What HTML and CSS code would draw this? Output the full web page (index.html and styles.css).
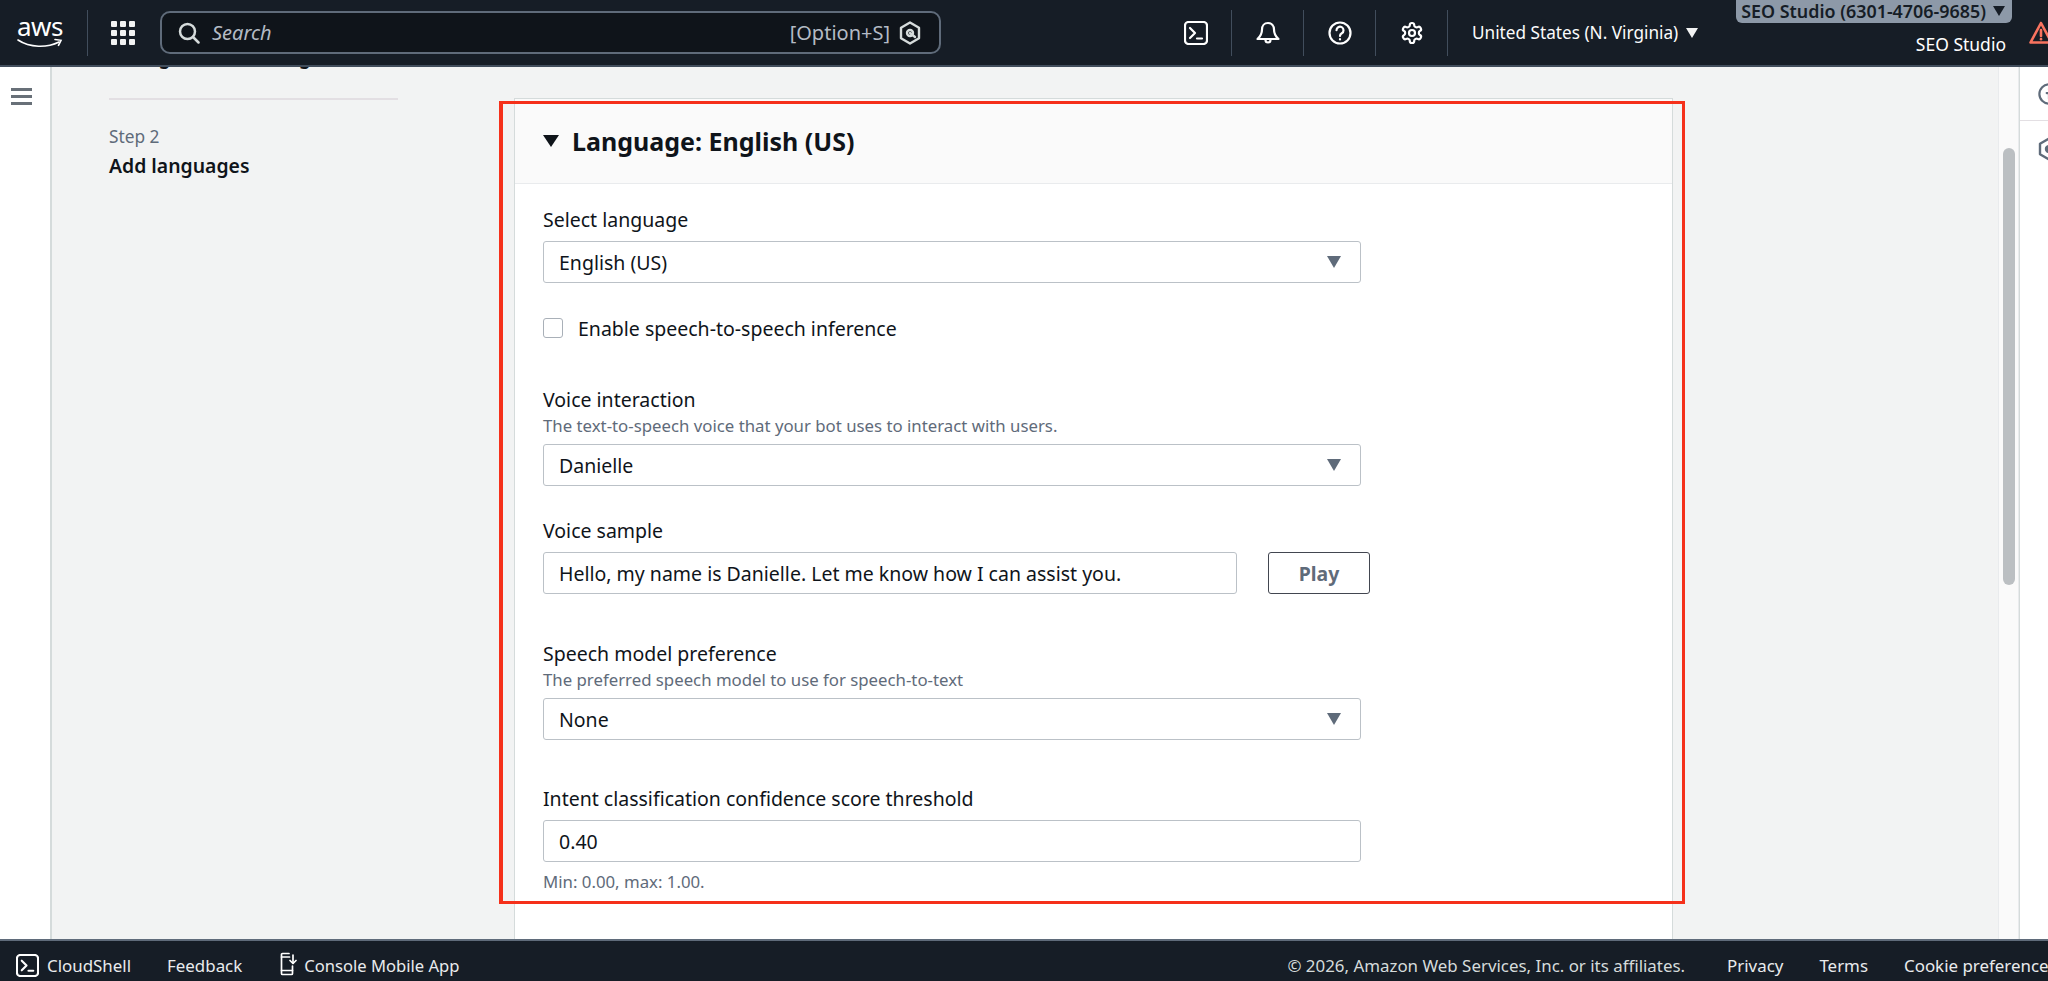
FILE: index.html
```html
<!DOCTYPE html>
<html lang="en">
<head>
<meta charset="utf-8">
<title>Add languages</title>
<link rel="stylesheet" href="styles.css">
</head>
<body>
<div class="app">
  <header class="topbar">
    <div class="logo">
      <span class="logo-text">aws</span>
      <svg class="logo-smile" viewBox="0 0 46 10" fill="none" stroke="#fff" stroke-width="1.6" stroke-linecap="round"><path d="M1 2c12 8 29 8 41 2"/><path d="M38 1.500l6 .8-2.500 5"/></svg>
    </div>
    <span class="top-divider"></span>
    <svg class="grid-icon" viewBox="0 0 24 24" fill="#f2f3f3"><rect x="0" y="0" width="6" height="6" rx="1"/><rect x="9" y="0" width="6" height="6" rx="1"/><rect x="18" y="0" width="6" height="6" rx="1"/><rect x="0" y="9" width="6" height="6" rx="1"/><rect x="9" y="9" width="6" height="6" rx="1"/><rect x="18" y="9" width="6" height="6" rx="1"/><rect x="0" y="18" width="6" height="6" rx="1"/><rect x="9" y="18" width="6" height="6" rx="1"/><rect x="18" y="18" width="6" height="6" rx="1"/></svg>
    <div class="search">
      <svg class="search-icon" viewBox="0 0 22 22" fill="none" stroke="#d5dbdb" stroke-width="2.500" stroke-linecap="round"><circle cx="9.500" cy="9.500" r="7.500"/><path d="M15 15l5.500 5.500"/></svg>
      <span class="search-text">Search</span>
      <span class="search-hint">[Option+S]</span>
      <svg class="q-icon" viewBox="0 0 22 24" fill="none" stroke="#d5dbdb" stroke-width="2.400" stroke-linejoin="round" stroke-linecap="round"><path d="M11 1.500l9 5.200v10.600l-9 5.200-9-5.200V6.700z"/><circle cx="11" cy="12" r="3"/><path d="M11 12l5 4"/></svg>
    </div>
    <div class="top-icons">
      <div class="top-cell">
        <svg class="top-icon" viewBox="0 0 24 24" fill="none" stroke="#fff" stroke-width="2.200" stroke-linecap="round" stroke-linejoin="round"><rect x="1" y="1" width="22" height="22" rx="3.500"/><path d="M6 7l5 5-5 5"/><path d="M13 17.500h5"/></svg>
      </div>
      <div class="top-cell">
        <svg class="top-icon" viewBox="0 0 24 24" fill="none" stroke="#fff" stroke-width="2.200" stroke-linecap="round" stroke-linejoin="round"><path d="M12 2c-3.800 0-6 2.800-6 6.500 0 4.500-1 6.500-4.500 9.500h21c-3.500-3-4.500-5-4.500-9.500C18 4.800 15.800 2 12 2z"/><path d="M9.500 19a2.500 2.500 0 0 0 5 0"/></svg>
      </div>
      <div class="top-cell">
        <svg class="top-icon" viewBox="0 0 24 24" fill="none" stroke="#fff" stroke-width="2.200" stroke-linecap="round" stroke-linejoin="round"><circle cx="12" cy="12" r="10.500"/><path d="M8.500 9.200a3.500 3.500 0 1 1 5.300 3c-1.200.7-1.800 1.400-1.800 2.800"/><path d="M12 18.200v.2"/></svg>
      </div>
      <div class="top-cell">
        <svg class="top-icon" viewBox="0 0 24 24" fill="none" stroke="#fff" stroke-width="2.200" stroke-linecap="round" stroke-linejoin="round"><path d="M12.220 2h-.44a2 2 0 0 0-2 2v.18a2 2 0 0 1-1 1.730l-.43.25a2 2 0 0 1-2 0l-.15-.08a2 2 0 0 0-2.730.73l-.22.38a2 2 0 0 0 .73 2.730l.15.1a2 2 0 0 1 1 1.720v.51a2 2 0 0 1-1 1.740l-.15.09a2 2 0 0 0-.73 2.730l.22.38a2 2 0 0 0 2.730.73l.15-.08a2 2 0 0 1 2 0l.43.25a2 2 0 0 1 1 1.730V20a2 2 0 0 0 2 2h.44a2 2 0 0 0 2-2v-.18a2 2 0 0 1 1-1.730l.43-.25a2 2 0 0 1 2 0l.15.08a2 2 0 0 0 2.730-.73l.22-.39a2 2 0 0 0-.73-2.730l-.15-.08a2 2 0 0 1-1-1.740v-.5a2 2 0 0 1 1-1.740l.15-.09a2 2 0 0 0 .73-2.730l-.22-.38a2 2 0 0 0-2.730-.73l-.15.08a2 2 0 0 1-2 0l-.43-.25a2 2 0 0 1-1-1.730V4a2 2 0 0 0-2-2z"/><circle cx="12" cy="12" r="3"/></svg>
      </div>
    </div>
    <div class="region">United States (N. Virginia)<span class="tri tri-white"></span></div>
    <div class="account">
      <div class="account-pill">SEO Studio (6301-4706-9685)<span class="tri tri-dark"></span></div>
      <div class="account-name">SEO Studio</div>
    </div>
    <svg class="warn-icon" viewBox="0 0 24 24" fill="none" stroke="#f9735f" stroke-width="2.600" stroke-linejoin="round" stroke-linecap="round"><path d="M12 2L1.500 21.500h21z"/><path d="M12 9v6"/><path d="M12 18v.2"/></svg>
  </header>

  <div class="main">
    <aside class="left-rail">
      <svg class="menu-icon" viewBox="0 0 21 17" fill="#687078"><rect width="21" height="3"/><rect y="7" width="21" height="3"/><rect y="14" width="21" height="3"/></svg>
    </aside>
    <div class="content">
      <nav class="steps">
        <div class="step-clipped">Configure bot settings</div>
        <div class="step-line"></div>
        <div class="step-num">Step 2</div>
        <div class="step-name">Add languages</div>
      </nav>
      <section class="card">
        <div class="card-head">
          <span class="tri tri-head"></span>
          <h2 class="card-title">Language: English (US)</h2>
        </div>
        <div class="card-body">
          <label class="label label-first">Select language</label>
          <div class="control select"><span>English (US)</span><span class="tri tri-select"></span></div>
          <div class="check-row"><span class="checkbox"></span><span>Enable speech-to-speech inference</span></div>
          <label class="label label-voice">Voice interaction</label>
          <div class="desc">The text-to-speech voice that your bot uses to interact with users.</div>
          <div class="control select"><span>Danielle</span><span class="tri tri-select"></span></div>
          <label class="label label-sample">Voice sample</label>
          <div class="sample-row">
            <div class="control sample-input">Hello, my name is Danielle. Let me know how I can assist you.</div>
            <button class="play">Play</button>
          </div>
          <label class="label label-speech">Speech model preference</label>
          <div class="desc">The preferred speech model to use for speech-to-text</div>
          <div class="control select"><span>None</span><span class="tri tri-select"></span></div>
          <label class="label label-intent">Intent classification confidence score threshold</label>
          <div class="control">0.40</div>
          <div class="hint">Min: 0.00, max: 1.00.</div>
          <div class="next-title">Timeouts for speech and DTMF</div>
        </div>
      </section>
    </div>
    <div class="scroll-track"><div class="scroll-thumb"></div></div>
    <aside class="right-rail">
      <div class="rail-cell rail-info">
        <svg class="rail-icon" viewBox="0 0 24 24" fill="none" stroke="#5f6b7a" stroke-width="2.400" stroke-linecap="round"><circle cx="12" cy="12" r="10.500"/><path d="M9.500 11H12v6"/><path d="M12 6.500v.2"/></svg>
      </div>
      <div class="rail-cell">
        <svg class="rail-icon rail-hex" viewBox="0 0 22 24" fill="none" stroke="#5f6b7a" stroke-width="2.400" stroke-linejoin="round" stroke-linecap="round"><path d="M11 1.500l9 5.200v10.600l-9 5.200-9-5.200V6.700z"/><circle cx="11" cy="12" r="3" fill="#5f6b7a"/></svg>
      </div>
    </aside>
    <div class="highlight"></div>
  </div>

  <footer class="footer">
    <div class="foot-item foot-shell">
      <svg class="foot-icon" viewBox="0 0 24 24" fill="none" stroke="#fff" stroke-width="2.200" stroke-linecap="round" stroke-linejoin="round"><rect x="1" y="1" width="22" height="22" rx="3.500"/><path d="M6 7l5 5-5 5"/><path d="M13 17.500h5"/></svg>
      <span>CloudShell</span>
    </div>
    <div class="foot-item foot-feedback">Feedback</div>
    <div class="foot-item foot-mobile">
      <svg class="mobile-icon" viewBox="0 0 17 24" fill="none" stroke="#fff" stroke-width="1.700" stroke-linecap="round" stroke-linejoin="round"><path d="M9 1.500H2.500a1 1 0 0 0-1 1v19a1 1 0 0 0 1 1h9a1 1 0 0 0 1-1V14"/><path d="M1.500 5h8"/><path d="M1.500 18.500h11"/><path d="M13 3v8"/><path d="M10 8.500l3 3 3-3"/></svg>
      <span class="foot-mobile-text">Console Mobile App</span>
    </div>
    <div class="foot-copy">© 2026, Amazon Web Services, Inc. or its affiliates.</div>
    <div class="foot-link foot-privacy">Privacy</div>
    <div class="foot-link foot-terms">Terms</div>
    <div class="foot-link foot-cookie">Cookie preferences</div>
  </footer>
</div>
</body>
</html>
```
FILE: styles.css
```css
* { box-sizing: border-box; }
html, body { margin: 0; height: 100%; overflow: hidden; }
body { font-family: "Noto Sans", "Open Sans", sans-serif; font-size: 19.5px; color: #0f141a; background: #fff; }

.app { display: flex; flex-direction: column; height: 100vh; overflow: hidden; }

/* top bar */
.topbar { flex: none; height: 67px; display: flex; align-items: center; background: #161d26; border-bottom: 2px solid #414d5c; color: #fff; overflow: hidden; padding-left: 17px; }
.logo { flex: none; width: 46px; height: 34px; position: relative; display: flex; flex-direction: column; align-items: center; margin-top: -2px; }
.logo-text { font-size: 26px; line-height: 22px; font-weight: 400; letter-spacing: -.5px; }
.logo-smile { width: 46px; height: 10px; margin-top: 1px; flex: none; }
.top-divider { flex: none; width: 1px; height: 46px; background: #414d5c; margin-left: 24px; }
.grid-icon { flex: none; width: 24px; height: 24px; margin-left: 23px; }
.search { flex: none; width: 781px; height: 43px; margin-left: 25px; display: flex; align-items: center; border: 2.500px solid #5f6b7a; border-radius: 10px; background: #0f141a; padding: 0 18px 0 16px; }
.search-icon { flex: none; width: 22px; height: 22px; }
.search-text { font-style: italic; color: #b4bbc5; font-size: 20px; margin-left: 12px; }
.search-hint { margin-left: auto; color: #b4bbc5; font-size: 20px; }
.q-icon { flex: none; width: 22px; height: 24px; margin-left: 9px; }
.top-icons { flex: none; display: flex; margin-left: 219px; }
.top-cell { width: 72px; height: 46px; display: flex; align-items: center; justify-content: center; border-right: 1px solid #414d5c; }
.top-icon { width: 24px; height: 24px; }
.region { flex: none; display: flex; align-items: center; margin-left: 24px; font-size: 17.200px; color: #fbfbfb; white-space: nowrap; }
.tri { display: inline-block; width: 0; height: 0; flex: none; border-style: solid; border-color: transparent; border-bottom-width: 0; }
.tri-white { margin-left: 8px; border-width: 10px 6px 0; border-top-color: #f2f3f3; }
.tri-dark { margin-left: 7px; border-width: 10px 6.500px 0; border-top-color: #161d26; }
.account { flex: none; margin-left: auto; display: flex; flex-direction: column; align-items: flex-end; align-self: flex-start; }
.account-pill { height: 23px; display: flex; align-items: center; padding: 0 7px 2px 5px; background: #8d99a8; border-radius: 0 0 6px 6px; color: #161d26; font-size: 17.900px; font-weight: 600; white-space: nowrap; }
.account-name { margin-top: 9px; padding-right: 6px; font-size: 17.500px; line-height: 24px; }
.warn-icon { flex: none; width: 26px; height: 24px; margin-left: 16px; margin-right: -6px; }

/* main */
.main { flex: 1; min-height: 0; display: flex; position: relative; overflow: hidden; }
.left-rail { flex: none; width: 52px; background: #fff; border-right: 2px solid #d5dbdb; padding: 21px 0 0 11px; }
.menu-icon { display: block; width: 21px; height: 17px; }
.content { flex: 1; min-width: 0; display: flex; align-items: flex-start; background: #f2f3f3; padding-left: 57px; }
.steps { flex: none; width: 289px; }
.step-clipped { margin-top: -21px; font-size: 19.400px; line-height: 22px; font-weight: 600; color: #0f141a; white-space: nowrap; }
.step-line { height: 2px; background: #e3dfe3; margin-top: 30px; }
.step-num { margin-top: 25px; font-size: 17.300px; line-height: 24px; color: #5f6b7a; }
.step-name { margin-top: 5px; font-size: 19.400px; line-height: 24px; font-weight: 600; }
.card { flex: none; width: 1159px; height: 900px; margin: 31px 0 0 116px; background: #fff; border: 1px solid #d5dbdb; border-width: 1px 1px 0; }
.card-head { height: 85px; display: flex; align-items: center; background: #fafafa; border-bottom: 1px solid #e9ebed; padding-left: 28px; }
.tri-head { border-width: 12px 8px 0; border-top-color: #0f141a; }
.card-title { margin: 0 0 0 13px; font-size: 25px; font-weight: 700; line-height: 32px; }
.card-body { padding: 25px 311px 0 28px; }
.label { display: block; line-height: 26px; }
.label-first { margin: -2px 0 2px; }
.label-voice { margin-top: 46px; }
.label-sample { margin-top: 32px; }
.label-speech { margin-top: 47px; }
.label-intent { margin-top: 46px; }
.desc { font-size: 16.800px; line-height: 24px; color: #5f6b7a; margin-top: 1px; }
.control { height: 42px; margin-top: 8px; display: flex; align-items: center; padding: 0 19px 0 15px; background: #fff; border: 1.500px solid #bbc1c7; border-radius: 3px; }
.desc + .control { margin-top: 6px; }
.select { justify-content: space-between; }
.tri-select { border-width: 12px 7.500px 0; border-top-color: #5f6b7a; }
.check-row { display: flex; align-items: center; height: 26px; margin-top: 32px; gap: 15px; }
.checkbox { width: 20px; height: 20px; border: 1.500px solid #a9b0b8; border-radius: 3px; background: #fff; }
.sample-row { display: flex; gap: 31px; margin-right: -10px; }
.sample-input { flex: none; width: 694px; white-space: nowrap; }
.play { flex: none; width: 102px; height: 42px; margin-top: 8px; background: #fff; border: 1.500px solid #424650; border-radius: 3px; font-family: inherit; font-size: 19.400px; font-weight: 700; color: #5f6b7a; }
.hint { margin-top: 8px; font-size: 16.800px; line-height: 24px; color: #5f6b7a; }
.next-title { margin-top: 42px; font-size: 19.500px; line-height: 24px; font-weight: 700; white-space: nowrap; }
.scroll-track { flex: none; width: 21px; background: #fafafa; border: 1px solid #e9ebed; border-width: 0 1px; position: relative; }
.scroll-thumb { position: absolute; left: 4px; top: 81px; width: 12px; height: 437px; border-radius: 6px; background: #bbbfc2; }
.right-rail { flex: none; width: 29px; background: #fff; border-left: 1px solid #d5dbdb; }
.rail-cell { height: 68px; padding: 0 0 0 18px; display: flex; align-items: center; overflow: hidden; }
.rail-info { height: 54px; border-bottom: 1px solid #e3dfe3; }
.rail-cell:last-child { height: 56px; }
.rail-icon { flex: none; width: 22px; height: 22px; }
.rail-hex { height: 24px; }
.highlight { position: absolute; left: 499px; top: 34px; width: 1186px; height: 803px; border: 3px solid #f5301a; border-left-width: 4px; pointer-events: none; }

/* footer */
.footer { flex: none; height: 42px; display: flex; align-items: center; padding-top: 8px; background: #161d26; border-top: 2px solid #5f6b7a; color: #e9ebed; font-size: 16.900px; white-space: nowrap; overflow: hidden; }
.foot-item { flex: none; display: flex; align-items: center; }
.foot-shell { margin-left: 16px; gap: 8px; }
.foot-icon { width: 23px; height: 23px; }
.foot-feedback { margin-left: 36px; }
.foot-mobile { margin-left: 38px; gap: 7px; }
.foot-mobile-text { font-size: 16.600px; }
.mobile-icon { width: 17px; height: 24px; margin-top: -2px; }
.foot-copy { margin-left: auto; flex: none; color: #d5dbdb; }
.foot-link { flex: none; }
.foot-privacy { margin-left: 42px; }
.foot-terms { margin-left: 36px; }
.foot-cookie { margin-left: 36px; width: 144px; }
```
